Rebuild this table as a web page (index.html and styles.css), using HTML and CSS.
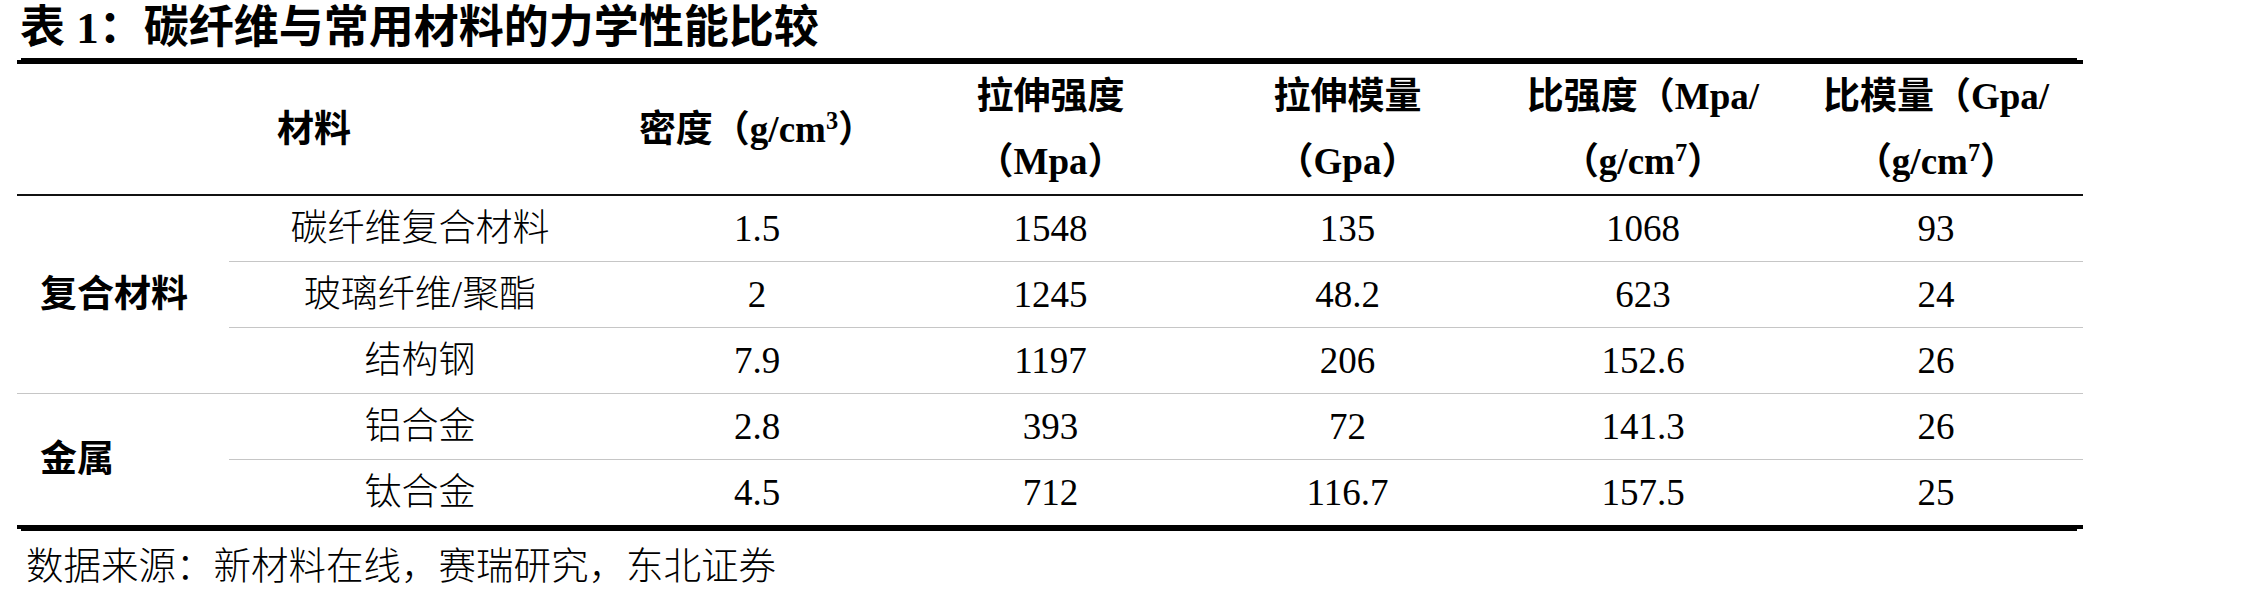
FILE: index.html
```html
<!DOCTYPE html>
<html lang="zh-CN">
<head>
<meta charset="utf-8">
<title>表 1：碳纤维与常用材料的力学性能比较</title>
<link rel="stylesheet" href="styles.css">
</head>
<body>
<div class="page">
  <h1 class="title">表 1：碳纤维与常用材料的力学性能比较</h1>
  <div class="frame">
    <table class="data">
      <colgroup>
        <col class="c-group">
        <col class="c-mat">
        <col class="c-n1">
        <col class="c-n2">
        <col class="c-n3">
        <col class="c-n4">
        <col class="c-n5">
      </colgroup>
      <thead>
        <tr>
          <th colspan="2">材料</th>
          <th>密度（g/cm<sup class="sup">3</sup>）</th>
          <th>拉伸强度<br>（Mpa）</th>
          <th>拉伸模量<br>（Gpa）</th>
          <th>比强度（Mpa/<br>（g/cm<sup class="sup">7</sup>）</th>
          <th>比模量（Gpa/<br>（g/cm<sup class="sup">7</sup>）</th>
        </tr>
      </thead>
      <tbody>
        <tr>
          <td class="grp" rowspan="3">复合材料</td>
          <td class="mat">碳纤维复合材料</td>
          <td>1.5</td><td>1548</td><td>135</td><td>1068</td><td>93</td>
        </tr>
        <tr>
          <td class="mat">玻璃纤维/聚酯</td>
          <td>2</td><td>1245</td><td>48.2</td><td>623</td><td>24</td>
        </tr>
        <tr>
          <td class="mat">结构钢</td>
          <td>7.9</td><td>1197</td><td>206</td><td>152.6</td><td>26</td>
        </tr>
        <tr>
          <td class="grp grp-last" rowspan="2">金属</td>
          <td class="mat">铝合金</td>
          <td>2.8</td><td>393</td><td>72</td><td>141.3</td><td>26</td>
        </tr>
        <tr>
          <td class="mat">钛合金</td>
          <td>4.5</td><td>712</td><td>116.7</td><td>157.5</td><td>25</td>
        </tr>
      </tbody>
    </table>
  </div>
  <p class="source">数据来源：新材料在线，赛瑞研究，东北证券</p>
</div>
</body>
</html>
```

FILE: styles.css
```css
html, body {
  margin: 0;
  padding: 0;
  background: #ffffff;
  color: #000000;
}

.page {
  width: 2066px;
  padding-left: 17px;
}

.title {
  margin: 0;
  height: 58px;
  padding-left: 3px;
  font-family: "Liberation Serif", "Noto Sans CJK SC", serif;
  font-weight: 700;
  font-size: 45px;
  line-height: 56px;
  white-space: nowrap;
}

.frame {
  margin: 0 6px 0 4px;
  border-top: 2px solid #000;
  border-bottom: 2px solid #000;
}

.data {
  width: 2066px;
  margin: 0 -6px 0 -4px;
  border-collapse: separate;
  border-spacing: 0;
  table-layout: fixed;
  border-top: 4px solid #000;
  border-bottom: 4px solid #000;
  font-family: "Liberation Serif", "Noto Sans CJK SC", serif;
  font-size: 37px;
}

.c-group { width: 212px; }
.c-mat { width: 382px; }
.c-n1 { width: 292px; }
.c-n2 { width: 295px; }
.c-n3 { width: 299px; }
.c-n4 { width: 292px; }
.c-n5 { width: 294px; }

.data th {
  padding: 0;
  height: 130px;
  line-height: 65px;
  font-weight: 700;
  text-align: center;
  vertical-align: middle;
  white-space: nowrap;
  border-bottom: 2px solid #111;
}

.sup {
  font-size: 0.66em;
  line-height: 0;
  vertical-align: 0.52em;
}

.data td {
  padding: 0;
  height: 65px;
  line-height: 40px;
  font-weight: 400;
  text-align: center;
  vertical-align: middle;
  white-space: nowrap;
  border-bottom: 1px solid #c6c6c6;
}

.data tbody tr:last-child td,
.data td.grp-last {
  border-bottom: none;
}

.data td.mat {
  font-weight: 300;
}

.data td.grp {
  text-align: left;
  padding-left: 23px;
  font-weight: 700;
}

.source {
  margin: 14px 0 0 0;
  padding-left: 9px;
  font-family: "Liberation Serif", "Noto Sans CJK SC", serif;
  font-size: 37.5px;
  line-height: 44px;
  font-weight: 300;
  white-space: nowrap;
}
```
